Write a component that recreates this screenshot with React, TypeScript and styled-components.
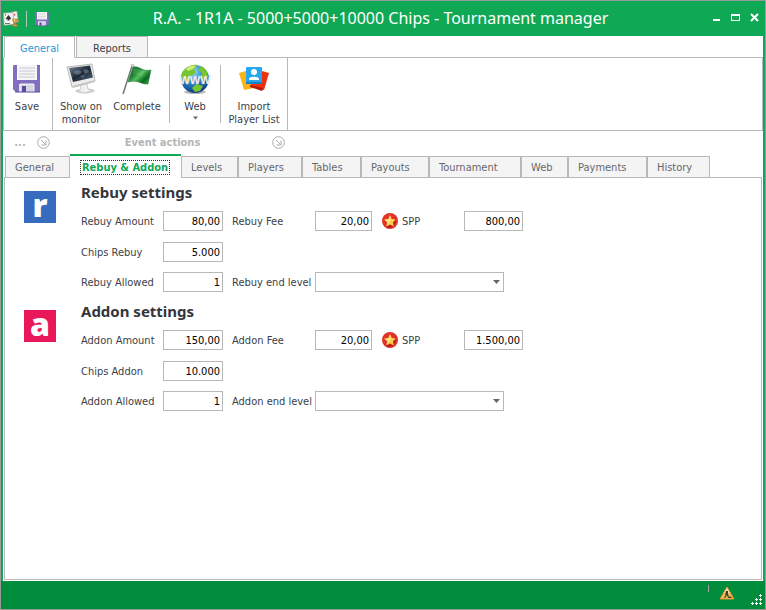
import React from "react";
import styled, { createGlobalStyle } from "styled-components";

const line = "#b8b8b8";
const green = "#0fa854";

const GlobalStyle = createGlobalStyle`
  *, *::before, *::after { box-sizing: border-box; }
  body { margin: 0; }
  body, button, input, select {
    font-family: "DejaVu Sans Condensed", "Noto Sans", sans-serif;
    font-size: 11px;
    line-height: 13px;
    color: #3c3e48;
  }
  button { border: 0; background: none; padding: 0; cursor: pointer; }
  svg { display: block; flex: none; }
`;

const Window = styled.div`
  display: flex;
  flex-direction: column;
  min-height: 100vh;
  border: 1px solid #999;
  background: ${green};
`;

const TitleBar = styled.header`
  display: flex;
  align-items: center;
  height: 35px;
  padding: 0 2px;
`;

const QuickAccess = styled.div`
  display: flex;
  align-items: center;
  gap: 7px;
`;

const QuickDivider = styled.span`
  width: 1px;
  height: 16px;
  background: #a9cdb4;
`;

const Title = styled.h1`
  flex: 1;
  margin: 0;
  padding: 0 0 2px 2px;
  text-align: center;
  font-family: "Noto Sans", sans-serif;
  font-size: 16px;
  line-height: 22px;
  font-weight: 400;
  color: #fff;
  white-space: nowrap;
`;

const WindowButtons = styled.div`
  display: flex;
  gap: 3px;
  padding-bottom: 4px;
`;

const WindowButton = styled.button`
  width: 16px;
  height: 16px;
`;

const Client = styled.main`
  flex: 1;
  display: flex;
  flex-direction: column;
  margin: 0 2px;
  padding-bottom: 1px;
  background: #fff;
`;

const RibbonTabs = styled.nav`
  display: flex;
  gap: 1px;
  height: 22px;
  padding-left: 1px;
`;

const RibbonTab = styled.button<{ $active?: boolean }>`
  position: relative;
  width: ${(p) => (p.$active ? 71 : 72)}px;
  height: 22px;
  padding-top: 2px;
  border: 1px solid ${line};
  border-bottom-color: ${(p) => (p.$active ? "#fff" : line)};
  background: ${(p) => (p.$active ? "#fff" : "#f4f4f4")};
  color: ${(p) => (p.$active ? "#1a9ad7" : "#3c3e48")};
`;

const Ribbon = styled.div`
  display: flex;
  height: 74px;
  margin-top: -1px;
  border: 1px solid ${line};
`;

const RibbonGroup = styled.div`
  display: flex;
  border-right: 1px solid ${line};
`;

const RibbonButton = styled.button<{ $width: number; $after?: number }>`
  display: flex;
  flex-direction: column;
  align-items: center;
  width: ${(p) => p.$width}px;
  margin-right: ${(p) => p.$after ?? 0}px;
  padding-top: 5px;
  white-space: pre-line;
  text-align: center;
`;

const RibbonLabel = styled.span`
  margin: 5px 0 3px;
`;

const RibbonDivider = styled.span`
  width: 1px;
  margin: 7px 0;
  background: ${line};
`;

const Captions = styled.div`
  display: flex;
  height: 23px;
`;

const Caption = styled.div<{ $width: number }>`
  display: flex;
  align-items: center;
  width: ${(p) => p.$width}px;
  padding: 0 3px 1px 0;
  font-weight: 700;
  color: #b4b4b4;
`;

const CaptionText = styled.span`
  flex: 1;
  text-align: center;
`;

const PageTabs = styled.nav`
  display: flex;
  align-items: flex-end;
  height: 24px;
  margin: 0 2px -1px;
`;

const PageTab = styled.button<{ $width: number; $active?: boolean }>`
  position: relative;
  width: ${(p) => p.$width}px;
  height: ${(p) => (p.$active ? 24 : 22)}px;
  padding: ${(p) => (p.$active ? "0 11px 0 10px" : "1px 9px 0")};
  text-align: left;
  white-space: nowrap;
  border: 1px solid ${line};
  border-left-width: ${(p) => (p.$active ? 0 : 1)}px;
  background: ${(p) => (p.$active ? "#fff" : "#f4f4f4")};
  color: ${(p) => (p.$active ? green : "#66686c")};
  font-weight: ${(p) => (p.$active ? 700 : 400)};
  ${(p) => p.$active && `border-width: 2px 0 0; border-top-color: ${green};`}
`;

const FocusBox = styled.span`
  display: block;
  padding-left: 1px;
  border: 1px dotted #333;
`;

const Page = styled.section`
  flex: 1;
  padding: 6px 19px;
  margin: 0 1px;
  border: 1px solid ${line};
`;

const Settings = styled.section`
  display: flex;
  gap: 25px;
  height: 119px;
`;

const Logo = styled.div<{ $color: string }>`
  flex: none;
  width: 32px;
  height: 32px;
  margin-top: 7px;
  background: ${(p) => p.$color};
  color: #fff;
  font-family: "Open Sans", sans-serif;
  font-size: 32px;
  line-height: 28px;
  font-weight: 800;
  text-align: center;
`;

const Heading = styled.h2`
  margin: 0 0 11px;
  font-family: "Noto Sans", sans-serif;
  font-size: 15px;
  line-height: 16px;
  font-weight: 700;
  color: #34363c;
`;

const Rows = styled.div`
  display: grid;
  grid-template-rows: 21px 20px 20px;
  row-gap: 10px;
`;

const Row = styled.div`
  display: flex;
  align-items: center;
  height: 20px;
`;

const Label = styled.label<{ $width: number }>`
  flex: none;
  width: ${(p) => p.$width}px;
  white-space: nowrap;
`;

const Input = styled.input<{ $width: number }>`
  width: ${(p) => p.$width}px;
  height: 20px;
  padding: 0 2px;
  border: 1px solid ${line};
  border-radius: 0;
  background: #fff;
  color: #000;
  text-align: right;
  outline: 0;
`;

const SecondLabel = styled(Label)`
  margin-left: 9px;
`;

const PointsLabel = styled(Label)`
  display: flex;
  align-items: center;
  gap: 4px;
  margin-left: 10px;
`;

const SelectBox = styled.div`
  display: grid;
  align-items: center;
  width: 189px;
  height: 20px;
  & > * { grid-area: 1 / 1; }
  & > svg { justify-self: end; margin-right: 4px; pointer-events: none; }
`;

const Select = styled.select`
  appearance: none;
  width: 100%;
  height: 20px;
  padding: 0 16px 0 3px;
  border: 1px solid ${line};
  border-radius: 0;
  background: #fff;
  outline: 0;
`;

const StatusBar = styled.footer`
  display: flex;
  justify-content: flex-end;
  height: 28px;
  padding: 4px 3px 0 0;
  background: #008c3a;
`;

const StatusDivider = styled.span`
  width: 1px;
  height: 7px;
  margin-right: 10px;
  background: #a3a3a3;
`;

const StatusIcon = styled.span`
  margin-right: 16px;
`;

const Grip = styled.span`
  margin-top: 9px;
`;

const CardsIcon = () => (
  <svg width="16" height="16" viewBox="0 0 16 16">
    <path d="M8 1l6-1 1.500 11-5 1z" fill="#f4f0ee" stroke="#8b8b80" strokeWidth=".7" />
    <path d="M11.500 2.500l1 1.200-.7 1.300-1.100-1.200z" fill="#c55" />
    <path d="M.5 2L10 1.500l.8 12-9.800.7z" fill="#f2f2f2" stroke="#a0a0a0" strokeWidth=".7" />
    <path d="M5.500 4l2.700 3.500-1.200 1-.9-.3.5 1.300H4.400l.5-1.300-1.100.3-1-1z" fill="#333" />
    <path d="M2 3h1v1.500H2zM2 12h5v1H2z" fill="#777" />
    <path d="M9.500 8h5.500l-.6 2.500-1.600 1.300v1.600h1.600V15.500H10v-2.100h1.600v-1.600L10 10.500z" fill="#dfa03a" stroke="#97601c" strokeWidth=".5" />
    <path d="M10.500 8.500h1.500v2z" fill="#ffeaa0" />
  </svg>
);

const DiskIcon = ({ size }: { size: number }) => (
  <svg width={size} height={size} viewBox="0 0 32 32">
    <path d="M3 2h26v27H5l-3-3V3z" fill="#7260b4" />
    <path d="M3 2h3v15h20V3l3 0v26H5l-3-3V3z" fill="#8572c4" opacity=".8" />
    <path d="M6 2h20v15H6z" fill="#f6f6f8" />
    <path d="M8 5h16M8 8h16M8 11h16M8 14h16" stroke="#c5c8ce" />
    <path d="M8 21h15v8H8z" fill="#d5d8e0" />
    <path d="M9 21h14v8H9z" fill="none" stroke="#f4f4f8" />
    <path d="M11 23h4v6h-4z" fill="#5b4a9c" />
    <path d="M4 29h25" stroke="#5747a0" />
  </svg>
);

const MonitorIcon = () => (
  <svg width="32" height="32" viewBox="0 0 32 32">
    <defs>
      <linearGradient id="screen" x1="0" y1="0" x2="1" y2="1">
        <stop offset="0" stopColor="#75879a" />
        <stop offset=".5" stopColor="#1d2835" />
        <stop offset="1" stopColor="#526a80" />
      </linearGradient>
    </defs>
    <ellipse cx="20" cy="28" rx="10" ry="2.500" fill="#d4d6d9" />
    <path d="M15 22l7-1 1 5 5 1-8 3-8-2 4-2z" fill="#f0f0f0" stroke="#b4b4b4" strokeWidth=".6" />
    <path d="M2 4l25-3 3 17-23 6z" fill="#ececec" stroke="#aaa" strokeWidth=".8" />
    <path d="M4 5l21-2.500 3 12-20 4.500z" fill="url(#screen)" />
    <path d="M9 8l5-1 3 2-2 2-3 1-3-2zM18 7l4-1 2 3-4 2zM15 13l5-1-2 3z" fill="#8fa5b5" opacity=".45" />
    <path d="M7 23l23-6v2L8 25z" fill="#c5c5c5" />
  </svg>
);

const FlagIcon = () => (
  <svg width="32" height="32" viewBox="0 0 32 32">
    <defs>
      <linearGradient id="cloth" x1="0" y1="0" x2="1" y2=".8">
        <stop offset="0" stopColor="#36884b" />
        <stop offset=".35" stopColor="#15772c" />
        <stop offset=".55" stopColor="#54c25c" />
        <stop offset=".8" stopColor="#09681f" />
        <stop offset="1" stopColor="#2aa13f" />
      </linearGradient>
    </defs>
    <path d="M2 31L11 3" stroke="#737873" strokeWidth="1.500" />
    <circle cx="11.500" cy="2.500" r="1.300" fill="#ddd" stroke="#888" strokeWidth=".5" />
    <path d="M12 4c6-2 9 5 18 3l-3 14c-7 1-9-5-20-2z" fill="url(#cloth)" stroke="#27773a" strokeWidth=".5" />
    <path d="M13 6c5-2 7 2 10 2l-2 6c-3-1-6-4-10-2z" fill="#8ed591" opacity=".25" />
  </svg>
);

const GlobeIcon = () => (
  <svg width="32" height="32" viewBox="0 0 32 32">
    <defs>
      <radialGradient id="sea" cx=".4" cy=".25" r=".8">
        <stop offset="0" stopColor="#9be6ff" />
        <stop offset=".5" stopColor="#2583d2" />
        <stop offset="1" stopColor="#0c3477" />
      </radialGradient>
    </defs>
    <ellipse cx="16" cy="29" rx="11" ry="2" fill="#b7b7b7" />
    <circle cx="16" cy="16" r="14" fill="url(#sea)" />
    <path d="M4 8c5-6 12-7 15-6l-4 4 2 4-5 3-2 7-6-3-2-5zM22 3c5 2 7 7 7 11l-4 4-4-4 2-4-4-3zM17 21l7 2-3 5-5 1-3-4z" fill="#76c52f" />
    <path d="M7 6c4-4 8-4 10-3l-3 3-5 2z" fill="#ccef70" />
    <text x="16" y="21" textAnchor="middle" fontFamily="Liberation Sans" fontWeight="700" fontSize="11" fill="#fff" stroke="#bbb" strokeWidth=".3">WWW</text>
  </svg>
);

const PlayersIcon = () => (
  <svg width="32" height="32" viewBox="0 0 32 32">
    <path d="M1 10l10-3 5 18-10 2z" fill="#f9b41c" />
    <path d="M20 7l11 3-5 17-14-3z" fill="#ec310b" />
    <path d="M12 22l13 3-1 3-12-4z" fill="#b91909" />
    <rect x="8" y="4" width="16" height="17" rx="1" fill="#28a7ed" />
    <path d="M8 19h16v2H8z" fill="#1681c5" />
    <circle cx="16" cy="9" r="3" fill="#fff" />
    <path d="M11 17v-1c0-3 10-3 10 0v1z" fill="#fff" />
  </svg>
);

const LauncherIcon = () => (
  <svg width="13" height="13" viewBox="0 0 13 13" fill="none" stroke="#aaa">
    <circle cx="6.500" cy="6.500" r="5.800" />
    <path d="M4 4l4.500 4.500M9 4.500V9H4.500" />
  </svg>
);

const StarIcon = () => (
  <svg width="16" height="16" viewBox="0 0 16 16">
    <circle cx="8" cy="8" r="8" fill="#e1322b" />
    <path d="M13 3a8 8 0 01-8 12l-1-2 9-7z" fill="#b8201f" />
    <path d="M8 2l1.800 3.900 4.200.5-3.100 2.900.8 4.200L8 11.400l-3.700 2.100.8-4.200L2 6.400l4.200-.5z" fill="#ffce45" />
    <path d="M8 3l1 4-2 3-2 2 1-3-3-2 4-1z" fill="#ffe58b" />
  </svg>
);

const ArrowIcon = ({ width = 7 }: { width?: number }) => (
  <svg width={width} height="4" viewBox="0 0 7 4">
    <path d="M0 0h7L3.500 4z" fill="#666" />
  </svg>
);

const WarningIcon = () => (
  <svg width="16" height="16" viewBox="0 0 16 16">
    <path d="M8 2l7 12H1z" fill="#f2bd58" stroke="#df9230" strokeLinejoin="round" />
    <path d="M8 3l3 5H5z" fill="#f4e5b7" />
    <path d="M7 6h2v2l1 5H9L8 10l-2 3H5l2-4-1 1zM10 12l1-1 2 2h-3z" fill="#433a24" />
  </svg>
);

const GripIcon = () => (
  <svg width="11" height="11" viewBox="0 0 11 11" fill="#fff">
    {[[8, 0], [4, 4], [8, 4], [0, 8], [4, 8], [8, 8]].map(([x, y]) => (
      <path key={`${x}-${y}`} d={`M${x + 1} ${y}h1v1h1v1h-1v1h-1v-1h-1v-1h1z`} />
    ))}
  </svg>
);

const pages = [
  { name: "General", width: 65 },
  { name: "Rebuy & Addon", width: 111, active: true },
  { name: "Levels", width: 57 },
  { name: "Players", width: 64 },
  { name: "Tables", width: 59 },
  { name: "Payouts", width: 68 },
  { name: "Tournament", width: 92 },
  { name: "Web", width: 47 },
  { name: "Payments", width: 79 },
  { name: "History", width: 63 },
];

type SettingsProps = {
  name: string;
  color: string;
  amount: string;
  points: string;
  chips: string;
};

function SettingsSection({ name, color, amount, points, chips }: SettingsProps) {
  const id = name.toLowerCase();
  return (
    <Settings>
      <Logo $color={color} aria-hidden="true">{id[0]}</Logo>
      <div>
        <Heading>{name} settings</Heading>
        <Rows>
          <Row>
            <Label $width={82} htmlFor={`${id}-amount`}>{name} Amount</Label>
            <Input $width={60} id={`${id}-amount`} defaultValue={amount} />
            <SecondLabel $width={83} htmlFor={`${id}-fee`}>{name} Fee</SecondLabel>
            <Input $width={57} id={`${id}-fee`} defaultValue="20,00" />
            <PointsLabel $width={82} htmlFor={`${id}-points`}><StarIcon />SPP</PointsLabel>
            <Input $width={59} id={`${id}-points`} defaultValue={points} />
          </Row>
          <Row>
            <Label $width={82} htmlFor={`${id}-chips`}>Chips {name}</Label>
            <Input $width={60} id={`${id}-chips`} defaultValue={chips} />
          </Row>
          <Row>
            <Label $width={82} htmlFor={`${id}-allowed`}>{name} Allowed</Label>
            <Input $width={60} id={`${id}-allowed`} defaultValue="1" />
            <SecondLabel $width={83} htmlFor={`${id}-end`}>{name} end level</SecondLabel>
            <SelectBox>
              <Select id={`${id}-end`}><option value="" /></Select>
              <ArrowIcon />
            </SelectBox>
          </Row>
        </Rows>
      </div>
    </Settings>
  );
}

export default function App() {
  return (
    <>
      <GlobalStyle />
      <Window>
        <TitleBar>
          <QuickAccess>
            <CardsIcon />
            <QuickDivider />
            <button aria-label="Save"><DiskIcon size={16} /></button>
          </QuickAccess>
          <Title>R.A. - 1R1A - 5000+5000+10000 Chips - Tournament manager</Title>
          <WindowButtons>
            <WindowButton aria-label="Minimize">
              <svg width="16" height="16"><path d="M4 10h7v2H4z" fill="#fff" /></svg>
            </WindowButton>
            <WindowButton aria-label="Maximize">
              <svg width="16" height="16"><path d="M3 5h9v7H3zM4 7v4h7V7z" fill="#fff" fillRule="evenodd" /></svg>
            </WindowButton>
            <WindowButton aria-label="Close">
              <svg width="16" height="16"><path d="M4 5l7 7M11 5l-7 7" stroke="#fff" strokeWidth="2" /></svg>
            </WindowButton>
          </WindowButtons>
        </TitleBar>
        <Client>
          <RibbonTabs>
            <RibbonTab $active>General</RibbonTab>
            <RibbonTab>Reports</RibbonTab>
          </RibbonTabs>
          <Ribbon>
            <RibbonGroup>
              <RibbonButton $width={46} $after={2}><DiskIcon size={32} /><RibbonLabel>Save</RibbonLabel></RibbonButton>
            </RibbonGroup>
            <RibbonGroup>
              <RibbonButton $width={56}><MonitorIcon /><RibbonLabel>{"Show on\nmonitor"}</RibbonLabel></RibbonButton>
              <RibbonButton $width={56} $after={4}><FlagIcon /><RibbonLabel>Complete</RibbonLabel></RibbonButton>
              <RibbonDivider />
              <RibbonButton $width={50}>
                <GlobeIcon /><RibbonLabel>Web</RibbonLabel><ArrowIcon width={5} />
              </RibbonButton>
              <RibbonDivider />
              <RibbonButton $width={66}><PlayersIcon /><RibbonLabel>{"Import\nPlayer List"}</RibbonLabel></RibbonButton>
            </RibbonGroup>
          </Ribbon>
          <Captions>
            <Caption $width={50}><CaptionText>...</CaptionText><LauncherIcon /></Caption>
            <Caption $width={235}><CaptionText>Event actions</CaptionText><LauncherIcon /></Caption>
          </Captions>
          <PageTabs>
            {pages.map((p) => (
              <PageTab key={p.name} $width={p.width} $active={p.active}>
                {p.active ? <FocusBox>{p.name}</FocusBox> : p.name}
              </PageTab>
            ))}
          </PageTabs>
          <Page>
            <SettingsSection name="Rebuy" color="#376bbd" amount="80,00" points="800,00" chips="5.000" />
            <SettingsSection name="Addon" color="#e9185a" amount="150,00" points="1.500,00" chips="10.000" />
          </Page>
        </Client>
        <StatusBar>
          <StatusDivider />
          <StatusIcon><WarningIcon /></StatusIcon>
          <Grip><GripIcon /></Grip>
        </StatusBar>
      </Window>
    </>
  );
}
